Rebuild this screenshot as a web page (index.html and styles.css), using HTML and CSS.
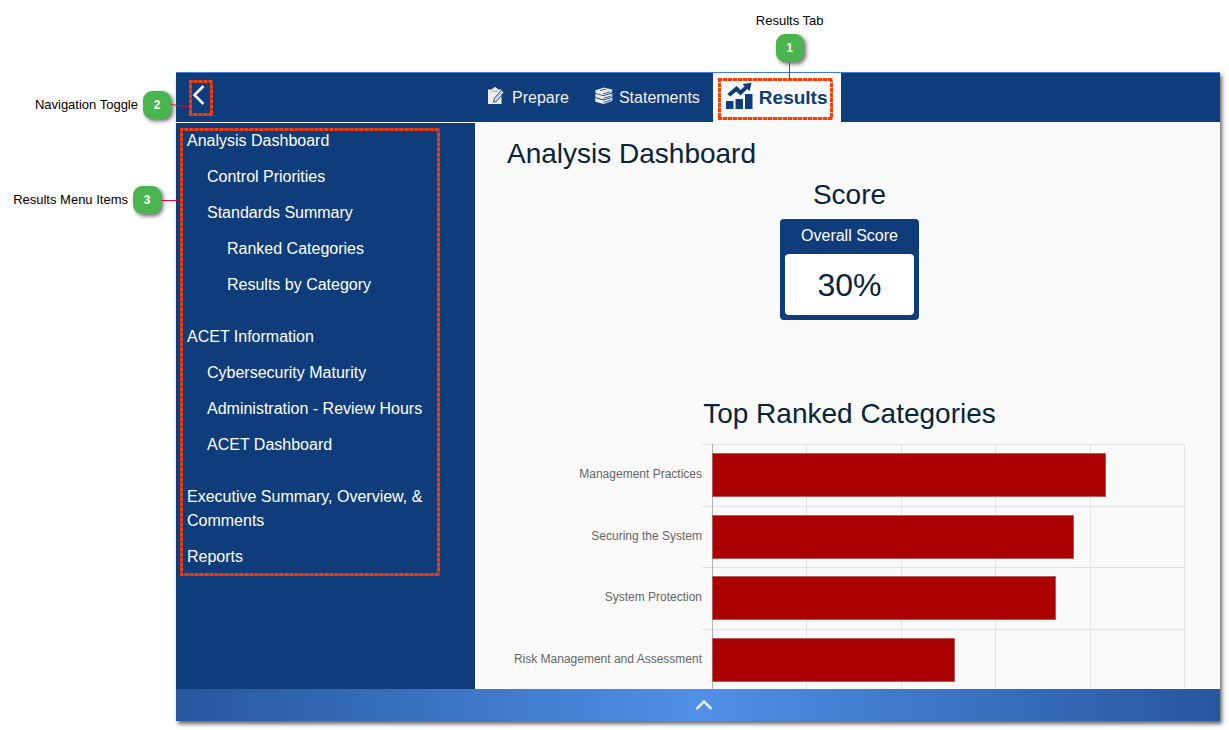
FILE: index.html
```html
<!DOCTYPE html>
<html lang="en">
<head>
<meta charset="utf-8">
<title>Analysis Dashboard</title>
<link rel="stylesheet" href="styles.css">
</head>
<body>
<div class="app">
  <header class="topbar">
    <div class="topbar-side">
      <div class="toggle-wrap">
        <button class="nav-toggle" type="button" aria-label="Toggle navigation">
          <svg width="16" height="20" viewBox="0 0 16 20"><path d="M12.500 1 3.500 10l9 9" fill="none" stroke="#f0f0f0" stroke-width="2.600"/></svg>
        </button>
        <div class="callout callout-left callout-toggle">
          <span class="callout-label">Navigation Toggle</span>
          <span class="badge">2</span>
          <svg class="leader" width="18" height="6" viewBox="0 0 18 6"><path d="M0 2.500 18 5" stroke="#f5003d" fill="none"/></svg>
        </div>
      </div>
    </div>
    <nav class="tabs" aria-label="Sections">
      <a class="tab" href="#prepare">
        <svg width="18" height="18" viewBox="0 0 18 18">
          <path d="M0 2.500h4V1.500h1.500a1.500 1.500 0 0 1 3 0H10v1h3.500V17H0z" fill="#ededed"/>
          <path d="M3.800 4.200h6" stroke="#7d94b8" stroke-width=".8"/>
          <path d="M13.400 3.200l2.600 2-6.900 8.500-3.600 1.500.9-3.800z" fill="#ededed" stroke="#0f3c7a" stroke-width=".9"/>
          <path d="M7.500 12.200l5.600-6.700" stroke="#6d86ae" stroke-width=".7"/>
        </svg>
        <span>Prepare</span>
      </a>
      <a class="tab" href="#statements">
        <svg width="18" height="18" viewBox="0 0 18 18">
          <g fill="#ededed">
            <path d="M0 3.500 9 .5l8.500 2.200-1 3.100-8.500 2.400L.5 6z"/>
            <path d="M.5 6.800l7.500 2.200 9.500-2.600-.3 3.500-8.700 2.600L.5 10.300z"/>
            <path d="M0 11l8.300 2.400 9.200-2.700-.3 3.200-8.700 3L.5 14.800z"/>
          </g>
          <path d="M8 6.900l7.500-2.200M8.500 11.200l8-2.300M8.500 15.500l8-2.500M5 3.600l6-1.500" fill="none" stroke="#0f3c7a" stroke-width=".8"/>
        </svg>
        <span>Statements</span>
      </a>
      <div class="tab-wrap">
        <a class="tab tab-active" href="#results" aria-current="page">
          <svg width="27" height="28" viewBox="0 0 27 28">
            <g fill="#0f3c7a">
              <path d="M0 19h7.500v8H0zM9.500 17H17v10H9.500zM19 12h7.500v15H19z"/>
              <path d="M16.500 2 25.500.8l-1.900 8.400-2.300-2.200-6.800 6.600-4.200-4.200-6.100 5.200L1.300 12 10.500 4l4.200 4.100 3.900-3.900z"/>
            </g>
          </svg>
          <span>Results</span>
        </a>
        <span class="dashed dashed-tab"></span>
        <div class="callout callout-top">
          <span class="callout-label">Results Tab</span>
          <span class="badge">1</span>
          <span class="leader leader-down"></span>
        </div>
      </div>
    </nav>
  </header>

  <div class="body">
    <aside class="sidebar">
      <ul class="menu">
        <li><a href="#dashboard">Analysis Dashboard</a>
          <ul>
            <li><a href="#priorities">Control Priorities</a></li>
            <li><a href="#standards">Standards Summary</a>
              <ul>
                <li><a href="#ranked">Ranked Categories</a></li>
                <li><a href="#by-category">Results by Category</a></li>
              </ul>
            </li>
          </ul>
        </li>
        <li class="group"><a href="#acet">ACET Information</a>
          <ul>
            <li><a href="#maturity">Cybersecurity Maturity</a></li>
            <li><a href="#hours">Administration - Review Hours</a></li>
            <li><a href="#acet-dashboard">ACET Dashboard</a></li>
          </ul>
        </li>
        <li class="group"><a href="#executive">Executive Summary, Overview, &amp; Comments</a></li>
        <li><a href="#reports">Reports</a></li>
      </ul>
      <span class="dashed dashed-menu"></span>
      <div class="callout callout-left callout-menu">
        <span class="callout-label">Results Menu Items</span>
        <span class="badge">3</span>
        <span class="leader leader-across"></span>
      </div>
    </aside>

    <main class="content">
      <h1>Analysis Dashboard</h1>
      <section class="score">
        <h2>Score</h2>
        <div class="score-card">
          <div class="score-label">Overall Score</div>
          <div class="score-value">30%</div>
        </div>
      </section>
      <section class="ranked">
        <h2>Top Ranked Categories</h2>
        <div class="chart">
          <div class="gridlines"><i></i><i></i><i></i><i></i><i></i></div>
          <div class="row"><span class="row-label">Management Practices</span><div class="track"><div class="bar" style="width:83.3%"></div></div></div>
          <div class="row"><span class="row-label">Securing the System</span><div class="track"><div class="bar" style="width:76.5%"></div></div></div>
          <div class="row"><span class="row-label">System Protection</span><div class="track"><div class="bar" style="width:72.8%"></div></div></div>
          <div class="row"><span class="row-label">Risk Management and Assessment</span><div class="track"><div class="bar" style="width:51.3%"></div></div></div>
        </div>
      </section>
    </main>
  </div>

  <footer class="drawer">
    <button class="drawer-toggle" type="button" aria-label="Expand footer">
      <svg width="18" height="12" viewBox="0 0 18 12"><path d="M1.500 10 9 2.500 16.500 10" fill="none" stroke="#e8e8e8" stroke-width="2.600"/></svg>
    </button>
  </footer>
</div>
</body>
</html>
```
FILE: styles.css
```css
* {
  box-sizing: border-box;
}

body {
  margin: 0;
  min-height: 100vh;
  padding: 72px 9px 9px 176px;
  background: #fff;
  color: #07243b;
  font: 16px/24px "Liberation Sans", Arial, sans-serif;
}

h1,
h2 {
  margin: 0;
  font-size: 28px;
  line-height: 34px;
  font-weight: 400;
}

a {
  color: inherit;
  text-decoration: none;
}

button {
  padding: 0;
  border: 0;
  background: none;
  cursor: pointer;
}

svg {
  display: block;
  flex: none;
}

.app {
  display: flex;
  flex-direction: column;
  height: calc(100vh - 81px);
  background: #fafafa;
  box-shadow: 2px 3px 4px rgba(0, 0, 0, 0.6);
}

/* Top bar */
.topbar {
  display: grid;
  grid-template-columns: 299px 1fr;
  height: 50px;
  flex: none;
  border-top: 1px solid #3f7fd6;
  background: #0f3c7a;
  color: #f0f0f0;
}

.topbar-side {
  padding: 7px 13px;
}

.toggle-wrap {
  position: relative;
  width: 24px;
}

.nav-toggle {
  display: flex;
  width: 24px;
  height: 36px;
  padding: 5px 2px;
}

.tabs {
  display: flex;
}

.tab {
  display: flex;
  align-items: center;
  gap: 6px;
  height: 49px;
  padding: 0 13px;
}

.tab svg {
  margin-bottom: 4px;
}

.tab-wrap {
  position: relative;
}

.tab-active {
  background: #fafafa;
  color: #0f3c7a;
  font-size: 19px;
  font-weight: 700;
}

/* Dashed highlight frames */
.dashed,
.nav-toggle {
  --dash: #ff3c00 0 3px, #9c3a38 3px 5px;
  background:
    repeating-linear-gradient(to right, var(--dash)) top / 100% 3px no-repeat,
    repeating-linear-gradient(to right, var(--dash)) bottom / 100% 3px no-repeat,
    repeating-linear-gradient(to bottom, var(--dash)) left / 3px 100% no-repeat,
    repeating-linear-gradient(to bottom, var(--dash)) right / 3px 100% no-repeat;
}

.dashed {
  position: absolute;
  pointer-events: none;
}

.dashed-tab {
  --dash: #ff3c00 0 4px, #ffb59e 4px 5px;
  inset: 5px 8px 3px 5px;
}

.dashed-menu {
  inset: 5px 35px 113px 4px;
}

/* Numbered callouts */
.callout {
  position: absolute;
  display: flex;
  align-items: center;
  color: #000;
  font-size: 13px;
  line-height: 16px;
  white-space: nowrap;
}

.callout-left .callout-label {
  margin-right: 5px;
}

.callout-toggle {
  top: 11px;
  right: 100%;
}

.callout-menu {
  top: 63px;
  left: 1px;
  transform: translateX(-100%);
}

.callout-top {
  bottom: 45px;
  left: 0;
  right: 0;
  flex-direction: column;
  padding-right: 26px;
  padding-left: 52px;
}

.callout-top .callout-label {
  margin-bottom: 5px;
}

.badge {
  width: 28px;
  height: 28px;
  border-radius: 9px;
  background: #4ab54e;
  box-shadow: 2px 2px 4px rgba(0, 0, 0, 0.6);
  color: #fff;
  font-size: 12px;
  font-weight: 700;
  line-height: 28px;
  text-align: center;
}

.leader {
  position: relative;
}

.leader-down {
  width: 1px;
  height: 16px;
  background: #f5003d;
}

.leader-across {
  width: 16px;
  height: 1px;
  background: #f5003d;
}

/* Sidebar and content */
.body {
  display: grid;
  grid-template-columns: 299px 1fr;
  flex: 1;
  min-height: 0;
}

.sidebar {
  position: relative;
  border-top: 1px solid #fff;
  background: #0f3c7a;
  color: #fff;
}

.menu,
.menu ul {
  margin: 0;
  padding: 0;
  list-style: none;
}

.menu {
  padding: 0 35px 0 11px;
}

.menu ul {
  padding-left: 20px;
}

.menu a {
  display: block;
  padding: 6px 0;
}

.menu .group {
  margin-top: 16px;
}

.content {
  overflow: hidden;
  padding: 15px 28px 0 32px;
}

.score,
.ranked {
  display: flex;
  flex-direction: column;
  align-items: center;
}

.score {
  gap: 7px;
  margin-top: 7px;
}

.score-card {
  padding: 0 5px 5px;
  border-radius: 4px;
  background: #0f3c7a;
  color: #fff;
  text-align: center;
}

.score-label {
  padding: 5px 16px 6px;
}

.score-value {
  padding: 11px 0 10px;
  border-radius: 4px;
  background: #fff;
  color: #07243b;
  font-size: 32px;
  line-height: 40px;
}

.ranked {
  margin-top: 77px;
}

/* Bar chart */
.chart {
  position: relative;
  display: grid;
  grid-template-rows: repeat(4, 1fr);
  align-self: stretch;
  height: 246px;
  margin: 13px 7px 0 0;
}

.row {
  display: flex;
}

.row-label {
  width: 195px;
  padding-top: 22px;
  color: #666;
  font-size: 12px;
  line-height: 16px;
  text-align: right;
  white-space: nowrap;
}

.track {
  flex: 1;
  padding: 8px 0 0 10px;
  border-top: 1px solid #e2e2e2;
}

.bar {
  position: relative;
  height: 44px;
  border: 1px solid #b85a5a;
  background: #a00;
}

.gridlines {
  position: absolute;
  inset: 0 0 0 205px;
  display: grid;
  grid-template-columns: repeat(5, 1fr);
  border-left: 1px solid #b3b3b3;
}

.gridlines i {
  border-right: 1px solid #e2e2e2;
}

/* Footer drawer */
.drawer {
  position: relative;
  display: flex;
  justify-content: center;
  height: 32px;
  flex: none;
  background: linear-gradient(to right, #25579d, #5090e6 50%, #25579d);
}

.drawer-toggle {
  display: flex;
  align-items: center;
  padding-left: 12px;
}
```
